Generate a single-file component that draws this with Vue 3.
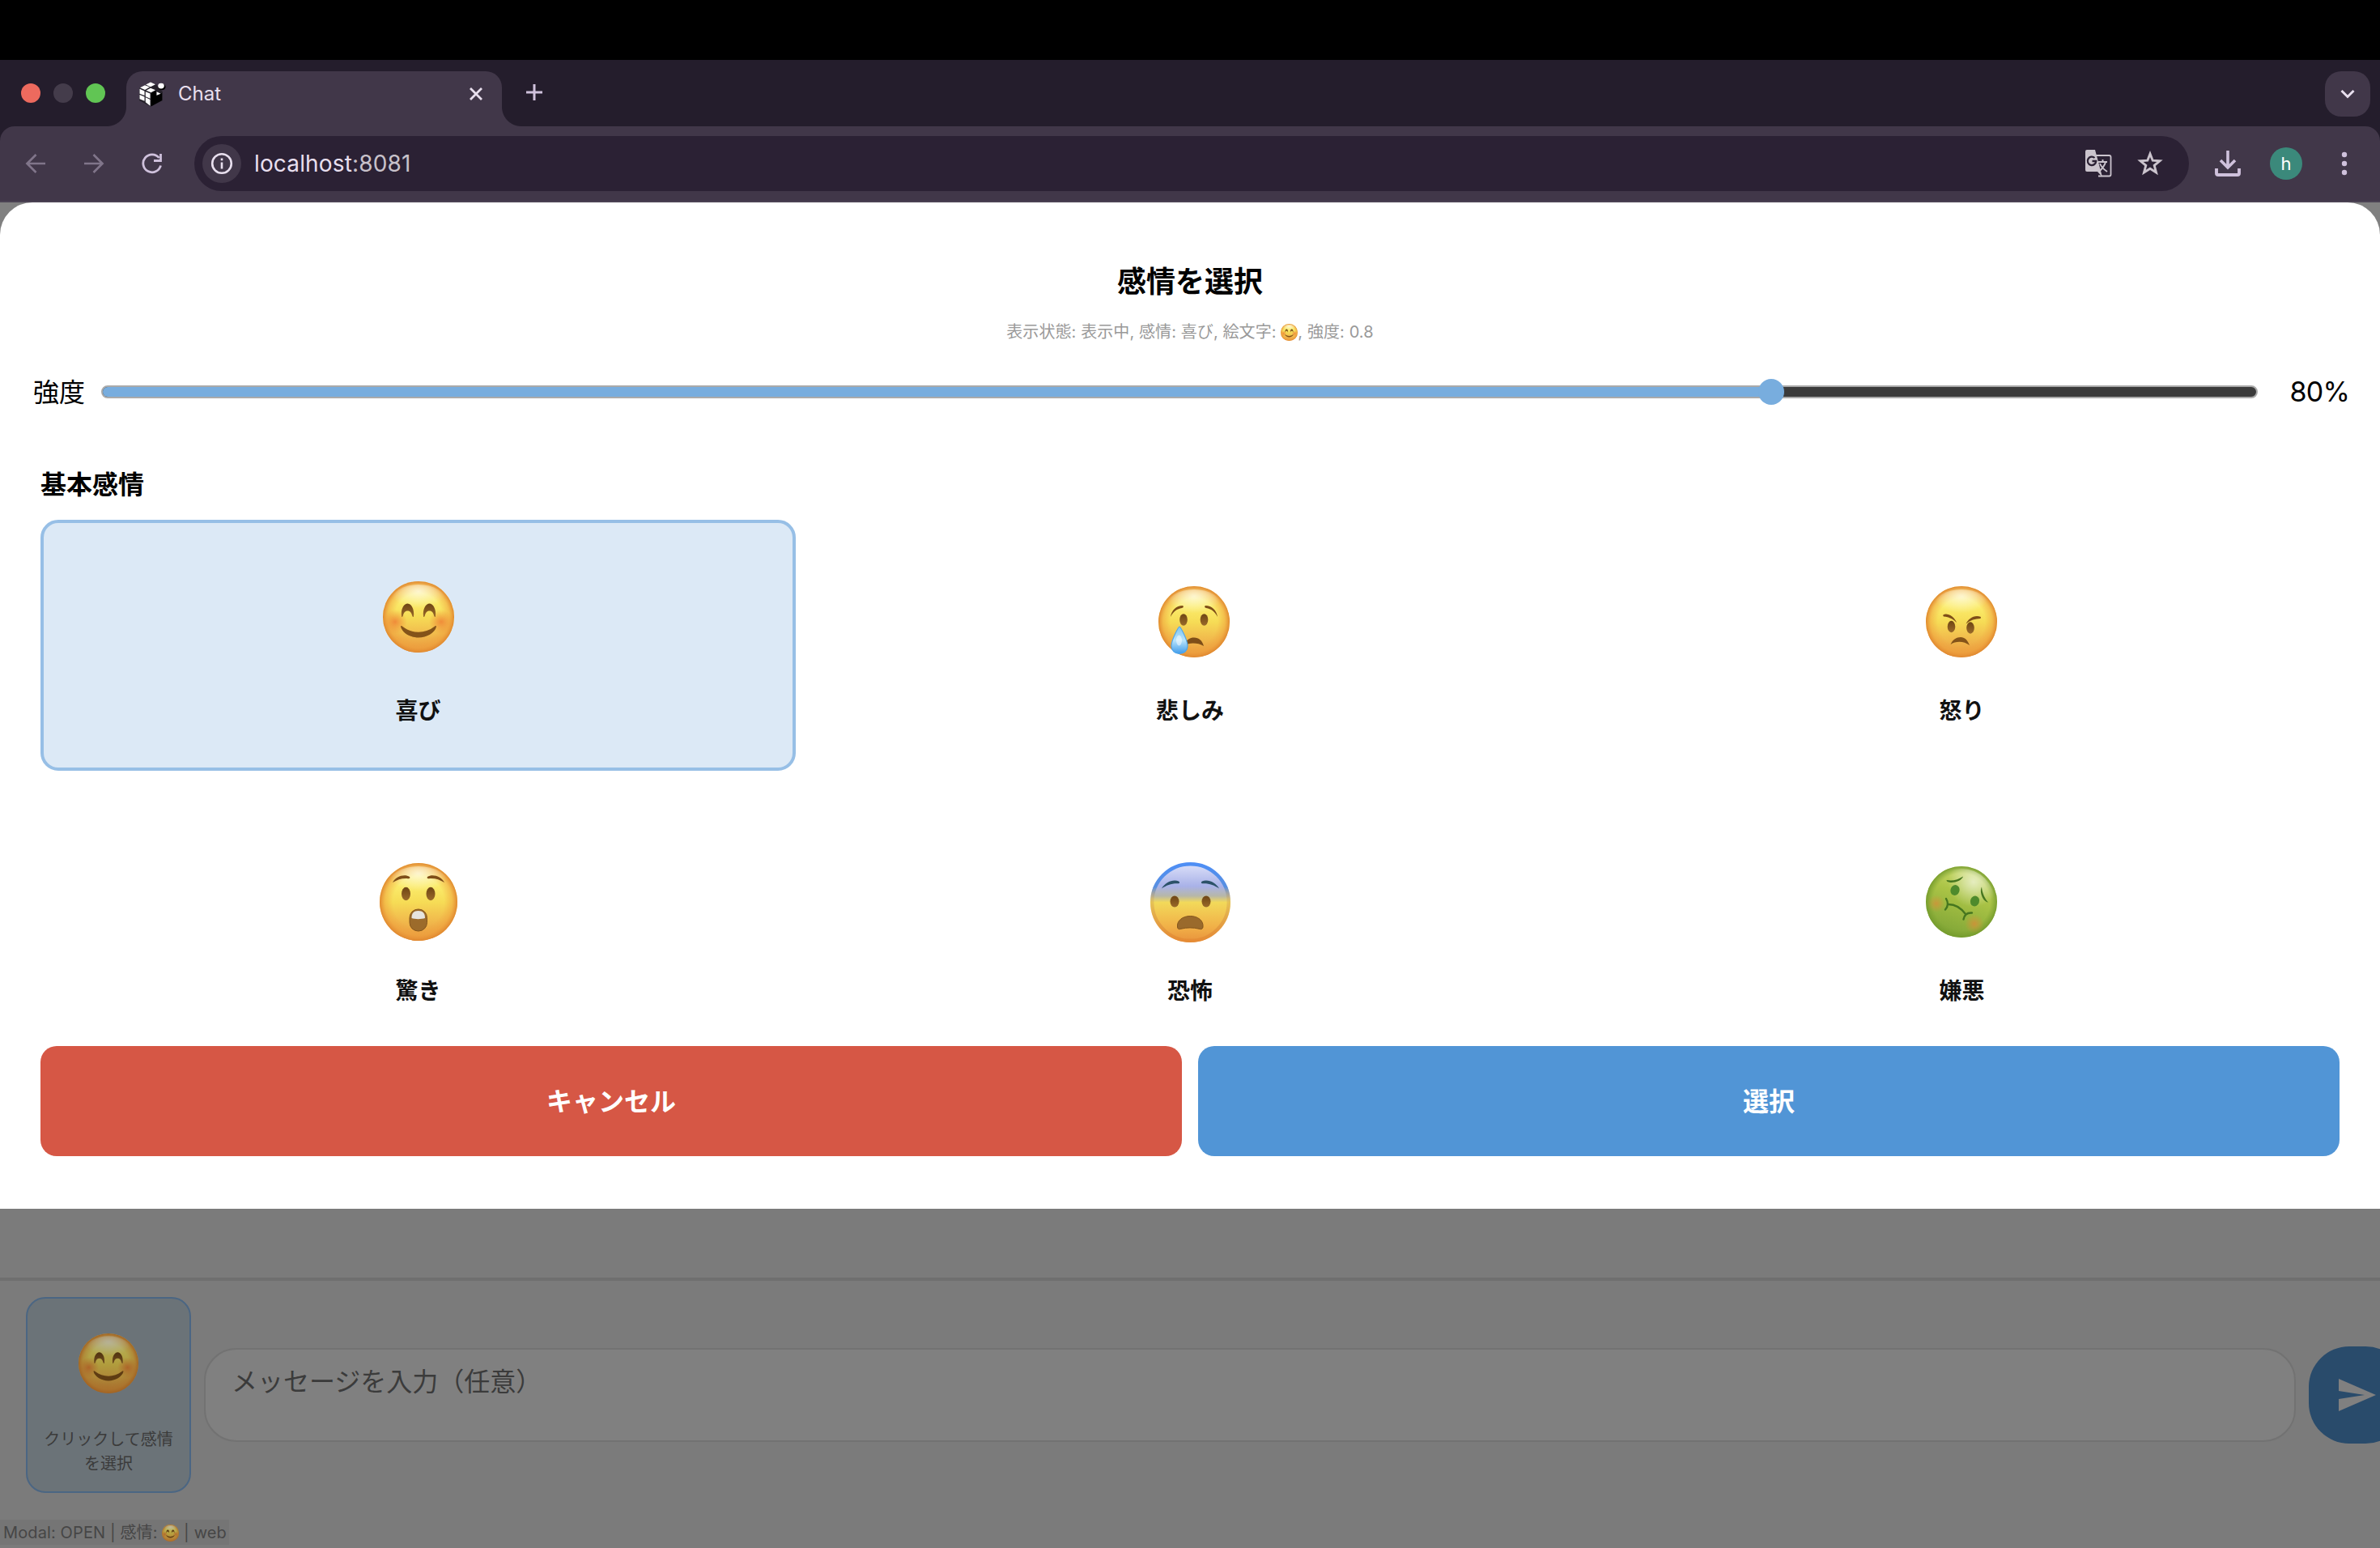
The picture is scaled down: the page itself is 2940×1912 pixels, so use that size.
<script setup>
const intensity = 0.8
const minimum = 0.1
const ratio = (intensity - minimum) / (1 - minimum)
const emotions = [
  { id: 'joy', name: '喜び', size: 88, dx: 0, dy: -6 },
  { id: 'sad', name: '悲しみ', size: 88, dx: 5, dy: 0 },
  { id: 'anger', name: '怒り', size: 88, dx: -1, dy: 0 },
  { id: 'surprise', name: '驚き', size: 96, dx: 0, dy: 0 },
  { id: 'fear', name: '恐怖', size: 99, dx: 0, dy: 0 },
  { id: 'disgust', name: '嫌悪', size: 88, dx: -1, dy: 0 },
]
const selected = 'joy'
</script>

<template>
  <div class="screen">
    <!-- shared face symbols -->
    <svg class="defs" width="0" height="0" aria-hidden="true">
      <defs>
        <linearGradient id="skin" x1="0" y1="0" x2="0" y2="1">
          <stop offset="0" stop-color="#fcef90" />
          <stop offset=".28" stop-color="#fbec6c" />
          <stop offset=".5" stop-color="#f6dc56" />
          <stop offset=".75" stop-color="#f1b94c" />
          <stop offset="1" stop-color="#e8963c" />
        </linearGradient>
        <radialGradient id="rim" cx=".5" cy=".5" r=".5">
          <stop offset=".66" stop-color="#f0a040" stop-opacity="0" />
          <stop offset=".86" stop-color="#ef9f3c" stop-opacity=".5" />
          <stop offset="1" stop-color="#e08830" stop-opacity="1" />
        </radialGradient>
        <radialGradient id="shine" cx=".5" cy=".2" r=".5">
          <stop offset="0" stop-color="#fff" stop-opacity=".65" />
          <stop offset="1" stop-color="#fff" stop-opacity="0" />
        </radialGradient>
        <radialGradient id="blush">
          <stop offset="0" stop-color="#ef7f35" stop-opacity=".85" />
          <stop offset="1" stop-color="#ef8a38" stop-opacity="0" />
        </radialGradient>
        <linearGradient id="brown" x1="0" y1="0" x2="0" y2="1">
          <stop offset="0" stop-color="#6e4514" />
          <stop offset="1" stop-color="#9a6a2a" />
        </linearGradient>
        <linearGradient id="tear" x1="0" y1="0" x2="0" y2="1">
          <stop offset="0" stop-color="#7cc4f2" />
          <stop offset=".5" stop-color="#b9e4fb" />
          <stop offset="1" stop-color="#3f9bea" />
        </linearGradient>
        <linearGradient id="dread" x1="0" y1="0" x2="0" y2="1">
          <stop offset="0" stop-color="#dfe3fa" />
          <stop offset=".3" stop-color="#a9b2e8" />
          <stop offset=".42" stop-color="#b7b7a8" />
          <stop offset=".5" stop-color="#f2d95a" />
          <stop offset=".8" stop-color="#f1b148" />
          <stop offset="1" stop-color="#e8923c" />
        </linearGradient>
        <linearGradient id="dreadRim" x1="0" y1="0" x2="0" y2="1">
          <stop offset="0" stop-color="#3580f4" />
          <stop offset=".3" stop-color="#4a8ae0" />
          <stop offset=".45" stop-color="#d0a050" stop-opacity=".4" />
          <stop offset="1" stop-color="#e58a33" />
        </linearGradient>
        <linearGradient id="green" x1=".7" y1="0" x2=".35" y2="1">
          <stop offset="0" stop-color="#d2df78" />
          <stop offset=".4" stop-color="#abc446" />
          <stop offset="1" stop-color="#7ea436" />
        </linearGradient>
        <radialGradient id="greenRim">
          <stop offset=".8" stop-color="#7ba22f" stop-opacity="0" />
          <stop offset="1" stop-color="#739a2c" stop-opacity=".9" />
        </radialGradient>
        <radialGradient id="greenShine" cx=".68" cy=".2" r=".38">
          <stop offset="0" stop-color="#fff" stop-opacity=".6" />
          <stop offset="1" stop-color="#fff" stop-opacity="0" />
        </radialGradient>
      </defs>

      <symbol id="face-joy" viewBox="0 0 88 88">
        <circle cx="44" cy="44" r="44" fill="url(#skin)" />
        <circle cx="44" cy="44" r="44" fill="url(#rim)" />
        <ellipse cx="44" cy="25" rx="34" ry="21" fill="url(#shine)" />
        <circle cx="15" cy="50" r="15" fill="url(#blush)" />
        <circle cx="72" cy="50" r="15" fill="url(#blush)" />
        <path d="M23 43C22 34 26 27.500 30.500 27.500S39 34 38 43C38 45 36.500 44 36 42C35 38 33 36.500 30.500 36.500S26 38 25 42C24.500 44 23 45 23 43Z" fill="url(#brown)" />
        <path d="M50 43C49 34 53 27.500 57.500 27.500S66 34 65 43C65 45 63.500 44 63 42C62 38 60 36.500 57.500 36.500S53 38 52 42C51.500 44 50 45 50 43Z" fill="url(#brown)" />
        <path d="M22 56C22 54.500 23.500 55 24.500 56C36 65 52 65 63.500 56C64.500 55 66 54.500 66 56C64 64 54 69.500 44 69.500S24 64 22 56Z" fill="#845319" />
      </symbol>

      <symbol id="face-sad" viewBox="0 0 88 88">
        <circle cx="44" cy="44" r="44" fill="url(#skin)" />
        <circle cx="44" cy="44" r="44" fill="url(#rim)" />
        <ellipse cx="44" cy="25" rx="34" ry="21" fill="url(#shine)" />
        <path d="M15 38C16 30 22 24 30 24C31.500 25 31 26.500 29 27C23 28 18.500 31 15 38Z" fill="#7e4e18" />
        <path d="M73 38C72 30 66 24 58 24C56.500 25 57 26.500 59 27C65 28 69.500 31 73 38Z" fill="#7e4e18" />
        <ellipse cx="31" cy="41.500" rx="4.800" ry="7.300" fill="url(#brown)" />
        <ellipse cx="56.500" cy="41.500" rx="4.800" ry="7.300" fill="url(#brown)" />
        <path d="M32 73C34 66 39 63.500 44 63.500C50 63.500 54 67 56 74C49 69.500 38 69.500 32 73Z" fill="#7e4e18" />
        <path d="M26 50C27 50 36 66 36 74A10 9.500 0 0 1 16 74C16 66 25 50 26 50Z" fill="url(#tear)" stroke="#4fa6ec" stroke-width="1.200" />
        <ellipse cx="25.500" cy="67" rx="3.500" ry="6.500" fill="#fff" opacity=".5" />
      </symbol>

      <symbol id="face-anger" viewBox="0 0 88 88">
        <circle cx="44" cy="44" r="44" fill="url(#skin)" />
        <circle cx="44" cy="44" r="44" fill="url(#rim)" />
        <ellipse cx="44" cy="25" rx="34" ry="21" fill="url(#shine)" />
        <path d="M21 36C26 32 35 37 38 45C33 40 28 38 22 37.500Z" fill="#7e4e18" />
        <path d="M68 38C61 35 53 39 49.500 46.500C55 42 61 40 67.500 40Z" fill="#7e4e18" />
        <ellipse cx="31.500" cy="50" rx="4.800" ry="7.200" fill="url(#brown)" />
        <ellipse cx="55" cy="51.500" rx="4.800" ry="7.200" fill="url(#brown)" />
        <path d="M30.500 72C33 66 38 63 43 63C48 63 51.500 66.500 54 73C47 67.500 37 67.500 30.500 72Z" fill="#845319" />
      </symbol>

      <symbol id="face-surprise" viewBox="0 0 96 96">
        <circle cx="48" cy="48" r="48" fill="url(#skin)" />
        <circle cx="48" cy="48" r="48" fill="url(#rim)" />
        <ellipse cx="48" cy="26" rx="37" ry="22" fill="url(#shine)" />
        <path d="M16 24C20 16 31 13 37 17C38 18.500 37 19.500 35 19.200C28 18.500 22 20.500 16 24Z" fill="#7e4e18" />
        <path d="M80 24C76 16 65 13 59 17C58 18.500 59 19.500 61 19.200C68 18.500 74 20.500 80 24Z" fill="#7e4e18" />
        <ellipse cx="32.500" cy="38" rx="5.500" ry="8.300" fill="url(#brown)" />
        <ellipse cx="63" cy="38" rx="5.500" ry="8.300" fill="url(#brown)" />
        <rect x="37" y="57" width="21.500" height="27" rx="10.500" fill="#9c6b2b" stroke="#84551c" stroke-width="1" />
        <path d="M39.500 68C39.500 62 42 59 47.700 59S56 62 56 68C52 69.500 43 69.500 39.500 68Z" fill="#e6e4de" />
      </symbol>

      <symbol id="face-fear" viewBox="0 0 99 99">
        <circle cx="49.500" cy="49.500" r="49.500" fill="url(#dread)" />
        <circle cx="49.500" cy="49.500" r="47.300" fill="none" stroke="url(#dreadRim)" stroke-width="4.400" opacity=".85" />
        <path d="M14 32.500C18 25 28 20.500 35 23.500C37 25 36 26.500 34 26.300C26 26 20 28.500 14 32.500Z" fill="#2c5268" />
        <path d="M85 32.500C81 25 71 20.500 64 23.500C62 25 63 26.500 65 26.300C73 26 79 28.500 85 32.500Z" fill="#2c5268" />
        <ellipse cx="30" cy="48.500" rx="5.500" ry="7" fill="url(#brown)" />
        <ellipse cx="69" cy="48.500" rx="5.500" ry="7" fill="url(#brown)" />
        <path d="M33.500 80C32.500 72 40 66.500 49.300 66.500S66 72 65 80C64.500 83 62.500 83 60 82.200C53 80.500 45 80.500 38 82.200C35.500 83 34 83 33.500 80Z" fill="#9a6a2c" stroke="#84551c" stroke-width="1" />
      </symbol>

      <symbol id="face-disgust" viewBox="0 0 88 88">
        <circle cx="44" cy="44" r="44" fill="url(#green)" />
        <circle cx="44" cy="44" r="44" fill="url(#greenRim)" />
        <circle cx="44" cy="44" r="41" fill="url(#greenShine)" />
        <circle cx="13" cy="46" r="11" fill="url(#blush)" opacity=".65" />
        <circle cx="60" cy="71" r="12" fill="url(#blush)" opacity=".7" />
        <path d="M25.500 17C33 18.500 40 16.500 46 12.500C44 19 31 22 26 18.500Z" fill="#46761f" />
        <path d="M69 25.500C69.500 33 73 40 77 44.500C71 44 65.500 32 69 25.500Z" fill="#46761f" />
        <ellipse cx="36" cy="29.500" rx="5.500" ry="6.500" transform="rotate(20 36 29.500)" fill="#4e8a2c" />
        <ellipse cx="60.500" cy="43" rx="5.500" ry="6.500" transform="rotate(20 60.500 43)" fill="#4e8a2c" />
        <path d="M25 40C28 45 28 49 24 53.500M28 47C36 47 43 51 49 59M57 57.500C51 57 47.500 60 46.500 65.500" fill="none" stroke="#46761f" stroke-width="2.400" stroke-linecap="round" />
      </symbol>
    </svg>

    <div class="menubar"></div>

    <header class="tabstrip">
      <div class="lights"><i class="red"></i><i class="grey"></i><i class="green"></i></div>
      <div class="tab">
        <svg class="favicon" width="34" height="33" viewBox="0 0 34 44" preserveAspectRatio="none">
          <path d="M1 12 15 2 22 6 30 18V32L15 42 1 32Z" fill="#26222b" />
          <path d="M2 11 8 7 14 10 8 14.500ZM9 6 15 2 21 5.500 15 9.500ZM9.500 15.500 15 11.500 21 15 15.500 19Z" fill="#fff" />
          <path d="M1.500 13 7.500 16.500V24L1.500 21ZM8.800 17.500 14.500 20.500V29L8.800 25.500ZM1.500 22.500 7.500 26V33L1.500 29.500ZM8.800 27 14.500 30.500V41L8.800 35Z" fill="#fff" />
          <path d="M15.500 20 22 15.500V24L29 20V32L15.500 42Z" fill="#000" />
          <path d="M22.500 17.500V23.500L27.500 21Z" fill="#fff" />
          <ellipse cx="29" cy="10" rx="4.500" ry="5" fill="#000" />
          <ellipse cx="28" cy="8" rx="3.800" ry="4.500" fill="#fff" />
        </svg>
        <span class="tab-title">Chat</span>
        <svg width="20" height="20" viewBox="0 0 20 20"><path d="M3 3 17 17M17 3 3 17" stroke="#e8dfee" stroke-width="2.800" /></svg>
      </div>
      <svg class="plus" width="22" height="22" viewBox="0 0 22 22"><path d="M11 1V21M1 11H21" stroke="#cfc1dc" stroke-width="3" /></svg>
      <div class="tabsearch">
        <svg width="20" height="14" viewBox="0 0 20 14"><path d="M2.500 3 10 10.500 17.500 3" fill="none" stroke="#e8dfee" stroke-width="3" /></svg>
      </div>
    </header>

    <div class="toolbar-back">
      <nav class="toolbar">
        <svg class="back" width="26" height="26" viewBox="0 0 26 26"><path d="M25 13H3M13.500 2 2.500 13 13.500 24" fill="none" stroke="#80758a" stroke-width="2.700" /></svg>
        <svg class="fwd" width="26" height="26" viewBox="0 0 26 26"><path d="M1 13H23M12.500 2 23.500 13 12.500 24" fill="none" stroke="#80758a" stroke-width="2.700" /></svg>
        <svg class="reload" width="26" height="26" viewBox="0 0 26 26"><path d="M23.500 15.500A11 11 0 1 1 21.500 6" fill="none" stroke="#cfc1dc" stroke-width="2.800" /><path d="M23.500 1V9.500H15" fill="none" stroke="#cfc1dc" stroke-width="2.800" /></svg>
        <div class="omnibox">
          <span class="info">
            <svg width="28" height="28" viewBox="0 0 28 28"><circle cx="14" cy="14" r="11.800" fill="none" stroke="#e8dfee" stroke-width="2.600" /><path d="M14 12.500V20.500M14 7.500V10.300" stroke="#e8dfee" stroke-width="2.600" /></svg>
          </span>
          <span class="url">localhost<b>:8081</b></span>
          <svg class="translate" width="34" height="36" viewBox="0 0 34 36">
            <path d="M13 8H30.500Q32.500 8 32.500 10V31.500Q32.500 33.500 30.500 33.500H17" fill="none" stroke="#cbc4cd" stroke-width="1.800" />
            <path d="M3 1H13L22 34.500 16 28H3Q1 28 1 26V3Q1 1 3 1Z" fill="#cbc4cd" />
            <path d="M12.500 11A5.200 5.200 0 1 0 14.200 15H9.500" fill="none" stroke="#2b2134" stroke-width="2.300" />
            <path d="M17 16H28M22.500 13V16M26 16C25 21 21 25 18 28M19 18C21 23 25 26 28 28" fill="none" stroke="#cbc4cd" stroke-width="1.900" />
          </svg>
          <svg class="star" width="32" height="32" viewBox="0 0 32 32"><path d="M16 4 19.200 12.200 28 12.800 21.200 18.400 23.500 27 16 22.200 8.500 27 10.800 18.400 4 12.800 12.800 12.200Z" fill="none" stroke="#cbc4cd" stroke-width="2.900" /></svg>
        </div>
        <svg class="download" width="32" height="34" viewBox="0 0 32 34"><path d="M16 1V22M7 13 16 22 25 13" fill="none" stroke="#cfc1dc" stroke-width="3.600" /><path d="M2 23V29Q2 31 4 31H28Q30 31 30 29V23" fill="none" stroke="#cfc1dc" stroke-width="3.900" /></svg>
        <span class="avatar">h</span>
        <svg class="dots" width="8" height="32" viewBox="0 0 8 32"><circle cx="4" cy="5" r="3.200" /><circle cx="4" cy="16" r="3.200" /><circle cx="4" cy="27" r="3.200" /></svg>
      </nav>
    </div>

    <main class="page">
      <section class="modal">
        <h1>感情を選択</h1>
        <p class="debug">表示状態: 表示中, 感情: 喜び, 絵文字: <svg class="mini" viewBox="0 0 88 88"><use href="#face-joy" /></svg>, 強度: 0.8</p>

        <div class="intensity">
          <span class="label">強度</span>
          <div class="track">
            <div class="fill" :style="{ width: `calc(17px + (100% - 32px) * ${ratio})` }"><i class="thumb"></i></div>
          </div>
          <span class="percent">{{ intensity * 100 }}%</span>
        </div>

        <h2>基本感情</h2>
        <div class="grid">
          <div v-for="e in emotions" :key="e.id" class="card" :class="{ selected: e.id === selected }">
            <div class="face">
              <svg :width="e.size" :height="e.size" :style="{ transform: `translate(${e.dx}px, ${e.dy}px)` }"><use :href="`#face-${e.id}`" /></svg>
            </div>
            <span class="name">{{ e.name }}</span>
          </div>
        </div>

        <div class="actions">
          <button class="cancel">キャンセル</button>
          <button class="ok">選択</button>
        </div>
      </section>

      <footer class="composer">
        <div class="picker">
          <svg width="74" height="74"><use href="#face-joy" /></svg>
          <span>クリックして感情<br />を選択</span>
        </div>
        <div class="input">メッセージを入力（任意）</div>
        <div class="send">
          <svg width="48" height="40" viewBox="0 0 48 40"><path d="M1 0 47 20 1 40V25L33 20 1 15Z" fill="#808080" /></svg>
        </div>
      </footer>
      <div class="status">Modal: OPEN | 感情: <svg class="mini" viewBox="0 0 88 88"><use href="#face-joy" /></svg> | web</div>
    </main>
  </div>
</template>

<style>
body {
  margin: 0;
  overflow: hidden;
  background: #7b7b7b;
}
</style>

<style scoped>
* {
  box-sizing: border-box;
}
.screen {
  width: 2940px;
  height: 1912px;
  overflow: hidden;
  display: flex;
  flex-direction: column;
  font-family: Inter, "Noto Sans CJK JP", sans-serif;
  color: #000;
}
.defs {
  position: absolute;
}
svg {
  flex: none;
}
.menubar {
  height: 74px;
  background: #000;
}
.tabstrip {
  height: 82px;
  background: #241d2c;
  display: flex;
  align-items: flex-start;
}
.lights {
  display: flex;
  gap: 16px;
  padding: 29px 0 0 26px;
  width: 156px;
}
.lights i {
  width: 24px;
  height: 24px;
  border-radius: 50%;
}
.red {
  background: #ed6a5e;
}
.grey {
  background: #443c4b;
}
.green {
  background: #61c554;
}
.tab {
  position: relative;
  margin-top: 14px;
  width: 464px;
  height: 68px;
  border-radius: 20px 20px 0 0;
  background: #413749;
  display: flex;
  align-items: center;
  padding: 0 22px 12px 15px;
}
.tab::before,
.tab::after {
  content: "";
  position: absolute;
  bottom: 0;
  width: 24px;
  height: 24px;
}
.tab::before {
  left: -24px;
  background: radial-gradient(circle at 0 0, transparent 23.500px, #413749 24.500px);
}
.tab::after {
  right: -24px;
  background: radial-gradient(circle at 100% 0, transparent 23.500px, #413749 24.500px);
}
.tab-title {
  flex: 1;
  padding-left: 15px;
  font-size: 24px;
  line-height: 28px;
  color: #e8dfee;
}
.plus {
  margin: 29px 0 0 29px;
}
.tabsearch {
  margin: 14px 12px 0 auto;
  width: 56px;
  height: 56px;
  border-radius: 20px;
  background: #413749;
  display: flex;
  align-items: center;
  justify-content: center;
}
.toolbar-back {
  height: 94px;
  background: #241d2c;
}
.toolbar {
  height: 94px;
  background: #413749;
  border-bottom: 2px solid #4b4253;
  border-radius: 18px 18px 0 0;
  display: flex;
  align-items: center;
}
.back {
  margin-left: 31px;
}
.fwd {
  margin-left: 46px;
}
.reload {
  margin-left: 46px;
}
.omnibox {
  margin-left: 39px;
  width: 2464px;
  height: 68px;
  border-radius: 34px;
  background: #2b2134;
  display: flex;
  align-items: center;
  padding: 0 32px 0 10px;
}
.info {
  width: 48px;
  height: 48px;
  border-radius: 50%;
  background: #413749;
  display: flex;
  align-items: center;
  justify-content: center;
}
.url {
  flex: 1;
  padding-left: 16px;
  font-size: 28px;
  letter-spacing: 0.15px;
  color: #e8dfee;
}
.url b {
  font-weight: 400;
  color: #c8c1ca;
}
.star {
  margin-left: 31px;
}
.download {
  margin-left: 32px;
}
.avatar {
  margin-left: 36px;
  width: 40px;
  height: 40px;
  border-radius: 50%;
  background: #3b897b;
  color: #fff;
  font-size: 22px;
  line-height: 40px;
  text-align: center;
}
.dots {
  margin-left: 48px;
  fill: #cfc1dc;
}
.page {
  flex: 1;
  background: #7b7b7b linear-gradient(#808080, #808080) no-repeat 0 0 / 100% 50px;
}
.modal {
  height: 1243px;
  border-radius: 40px 40px 0 0;
  background: #fff;
  display: flex;
  flex-direction: column;
}
h1 {
  margin: 74px 0 0;
  font-size: 36px;
  line-height: 48px;
  font-weight: 700;
  text-align: center;
}
.debug {
  margin: 23px 0 0;
  font-size: 20px;
  line-height: 30px;
  letter-spacing: 0.09px;
  color: #999;
  text-align: center;
}
.mini {
  width: 21px;
  height: 21px;
  vertical-align: -4px;
}
.intensity {
  margin-top: 35px;
  height: 48px;
  display: flex;
  align-items: center;
  padding: 0 38px 0 41px;
}
.label {
  width: 84px;
  padding-bottom: 4px;
  font-size: 32px;
}
.track {
  width: 2664px;
  height: 16px;
  border: 2px solid #aaa;
  border-radius: 8px;
  background: #3b3b3b;
}
.fill {
  position: relative;
  height: 12px;
  border-radius: 6px 0 0 6px;
  background: #78adde;
}
.thumb {
  position: absolute;
  right: -16px;
  top: -10px;
  width: 32px;
  height: 32px;
  border-radius: 50%;
  background: #78adde;
}
.percent {
  flex: 1;
  padding-bottom: 1px;
  text-align: right;
  font-size: 34px;
  letter-spacing: -0.8px;
}
h2 {
  margin: 67px 0 0 50px;
  font-size: 32px;
  line-height: 48px;
  font-weight: 700;
}
.grid {
  margin: 19px 50px 0;
  height: 650px;
  overflow: hidden;
  display: grid;
  grid-template-columns: repeat(3, 933px);
  grid-auto-rows: 310px;
  gap: 36px 20.500px;
}
.card {
  border: 4px solid transparent;
  border-radius: 22px;
  padding-top: 50px;
  display: flex;
  flex-direction: column;
  align-items: center;
}
.card.selected {
  background: #dce9f6;
  border-color: #97bfe6;
}
.face {
  height: 144px;
  display: flex;
  align-items: center;
}
.name {
  margin-top: 17px;
  font-size: 28px;
  line-height: 42px;
  font-weight: 700;
  color: #111;
}
.actions {
  display: flex;
  gap: 20px;
  padding: 0 50px;
}
.actions button {
  flex: 1;
  height: 136px;
  border: 0;
  border-radius: 20px;
  padding: 0 0 5px;
  color: #fff;
  font: 700 32px Inter, "Noto Sans CJK JP", sans-serif;
}
.cancel {
  background: #d65745;
}
.ok {
  background: #5195d6;
}
.composer {
  margin-top: 85px;
  height: 286px;
  border-top: 4px solid #6f6f6f;
  display: flex;
  align-items: center;
  padding: 0 0 0 32px;
  overflow: hidden;
}
.picker {
  flex: none;
  width: 204px;
  height: 242px;
  border: 2px solid #4b6683;
  border-radius: 24px;
  background: #6b7378;
  display: flex;
  flex-direction: column;
  align-items: center;
  padding-top: 43px;
}
.picker svg {
  filter: brightness(.72);
}
.picker span {
  margin-top: 42px;
  font-size: 20px;
  line-height: 30px;
  text-align: center;
  color: #3b3b3b;
}
.input {
  flex: none;
  margin-left: 16px;
  width: 2584px;
  height: 116px;
  border: 2px solid #727272;
  border-radius: 40px;
  background: #808080;
  padding: 16px 32px;
  font-size: 32px;
  line-height: 48px;
  color: #3b3b3b;
}
.send {
  flex: none;
  margin-left: 16px;
  width: 120px;
  height: 120px;
  border-radius: 50px;
  background: #294b6b;
  display: flex;
  align-items: center;
  justify-content: center;
}
.status {
  width: 283px;
  height: 31px;
  margin-top: 13px;
  padding-left: 4px;
  background: #757575;
  color: #464646;
  font-size: 20px;
  letter-spacing: 0.12px;
  line-height: 32px;
  white-space: nowrap;
}
.status .mini {
  filter: brightness(.75);
}
</style>
